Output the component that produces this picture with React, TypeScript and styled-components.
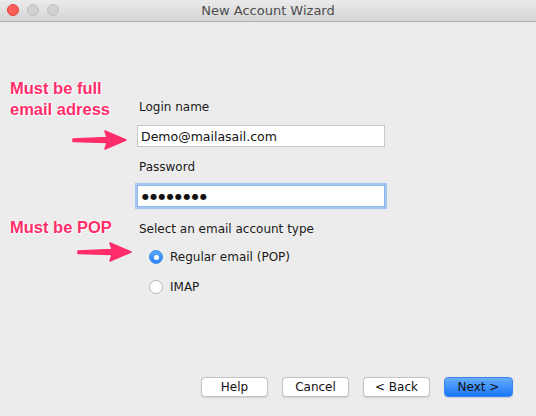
import React from "react";
import styled, { createGlobalStyle } from "styled-components";

const Global = createGlobalStyle`
  html, body { margin: 0; padding: 0; }
  body { width: 536px; height: 416px; overflow: hidden; background: #ececec; font-family: "DejaVu Sans", "Liberation Sans", sans-serif; }
`;

const Window = styled.div`
  width: 536px;
  height: 416px;
  display: flex;
  flex-direction: column;
  background: #ececec;
`;

const TitleBar = styled.div`
  height: 21px;
  flex: none;
  position: relative;
  display: flex;
  align-items: center;
  justify-content: center;
  background: linear-gradient(#ebebeb, #d5d5d5);
  border-bottom: 1px solid #b3b3b3;
  color: #4d4d4d;
  font-size: 13px;
`;

const Lights = styled.div`
  position: absolute;
  left: 7px;
  top: 4px;
  display: flex;
  gap: 8px;
`;

const Light = styled.span<{ $c: string; $b: string }>`
  width: 12px;
  height: 12px;
  border-radius: 50%;
  box-sizing: border-box;
  background: ${(p) => p.$c};
  border: 1px solid ${(p) => p.$b};
`;

const Body = styled.div`
  flex: 1;
  display: grid;
  grid-template-columns: 137px 1fr;
`;

const Notes = styled.div`
  display: flex;
  flex-direction: column;
  padding: 0 0 0 10px;
`;

const Note = styled.div<{ $top: number }>`
  margin-top: ${(p) => p.$top}px;
  color: #ff2d6a;
  font-family: "Liberation Sans", Arial, sans-serif;
  font-weight: bold;
  font-size: 16.5px;
  line-height: 21px;
  white-space: nowrap;
  text-shadow: 0 0 2px #fff, 0 0 2px #fff, 1px 1px 1px #fff;
`;

const ArrowBox = styled.div<{ $top: number; $left: number }>`
  margin-top: ${(p) => p.$top}px;
  margin-left: ${(p) => p.$left}px;
  height: 20px;
  svg { display: block; }
`;

const Form = styled.div`
  display: flex;
  flex-direction: column;
  padding-top: 76px;
  width: 248px;
`;

const Label = styled.div<{ $mt: number }>`
  margin-top: ${(p) => p.$mt}px;
  margin-left: 2px;
  font-size: 12px;
  line-height: 16px;
  color: #1a1a1a;
`;

const Field = styled.div<{ $focus?: boolean }>`
  margin-top: 10px;
  height: 22px;
  box-sizing: border-box;
  background: #fff;
  border: 1px solid ${(p) => (p.$focus ? "#8fb8ec" : "#c8c8c8")};
  box-shadow: ${(p) => (p.$focus ? "0 0 0 2px #a3c6f2" : "none")};
  display: flex;
  align-items: center;
  padding-left: 3px;
  font-size: 12.5px;
  color: #111;
`;

const Dots = styled.span`
  letter-spacing: 1.3px;
  font-size: 8px;
  padding-left: 1px;
`;

const RadioRow = styled.div<{ $mt: number }>`
  margin-top: ${(p) => p.$mt}px;
  margin-left: 12px;
  display: flex;
  align-items: center;
  gap: 7px;
  font-size: 12px;
  color: #1a1a1a;
`;

const Radio = styled.span<{ $on?: boolean }>`
  width: 14px;
  height: 14px;
  border-radius: 50%;
  box-sizing: border-box;
  display: flex;
  align-items: center;
  justify-content: center;
  background: ${(p) => (p.$on ? "linear-gradient(#5aa7fb, #2a80f5)" : "#fff")};
  border: 1px solid ${(p) => (p.$on ? "#3b8cf0" : "#b8b8b8")};
  &::after {
    content: "";
    display: ${(p) => (p.$on ? "block" : "none")};
    width: 5px;
    height: 5px;
    border-radius: 50%;
    background: #fff;
  }
`;

const Footer = styled.div`
  flex: none;
  display: flex;
  justify-content: flex-end;
  gap: 14px;
  padding: 0 23px 19px 0;
`;

const Button = styled.button<{ $primary?: boolean }>`
  width: ${(p) => (p.$primary ? 69 : 67)}px;
  height: 20px;
  padding: 0;
  box-sizing: border-box;
  border-radius: 4px;
  font-family: "DejaVu Sans", sans-serif;
  font-size: 12px;
  color: #111;
  border: 1px solid ${(p) => (p.$primary ? "#3a85f0" : "#c4c4c4")};
  background: ${(p) => (p.$primary ? "linear-gradient(#66adfd, #1a78f6)" : "#fff")};
  box-shadow: 0 0.5px 1px rgba(0,0,0,0.12);
`;

function PinkArrow() {
  return (
    <svg width="56" height="20" viewBox="0 0 56 20">
      <path d="M2 9 L36 7.5 L34 1 L55 10 L34 19 L36 12.5 L2 11.5 Z" fill="#ff2d6a" stroke="#ff2d6a" strokeWidth="1.5" strokeLinejoin="round" />
    </svg>
  );
}

export default function App() {
  return (
    <>
      <Global />
      <Window>
        <TitleBar>
          <Lights>
            <Light $c="#fc5f57" $b="#e0443e" />
            <Light $c="#d1d1d1" $b="#c2c2c2" />
            <Light $c="#d1d1d1" $b="#c2c2c2" />
          </Lights>
          New Account Wizard
        </TitleBar>
        <Body>
          <Notes>
            <Note $top={56}>Must be full<br />email adress</Note>
            <ArrowBox $top={10} $left={61}><PinkArrow /></ArrowBox>
            <Note $top={67}>Must be POP</Note>
            <ArrowBox $top={4} $left={66}><PinkArrow /></ArrowBox>
          </Notes>
          <Form>
            <Label $mt={1}>Login name</Label>
            <Field>Demo@mailasail.com</Field>
            <Label $mt={12}>Password</Label>
            <Field $focus><Dots>●●●●●●●●</Dots></Field>
            <Label $mt={14}>Select an email account type</Label>
            <RadioRow $mt={13}><Radio $on />Regular email (POP)</RadioRow>
            <RadioRow $mt={16}><Radio />IMAP</RadioRow>
          </Form>
        </Body>
        <Footer>
          <Button>Help</Button>
          <Button>Cancel</Button>
          <Button>&lt; Back</Button>
          <Button $primary>Next &gt;</Button>
        </Footer>
      </Window>
    </>
  );
}
